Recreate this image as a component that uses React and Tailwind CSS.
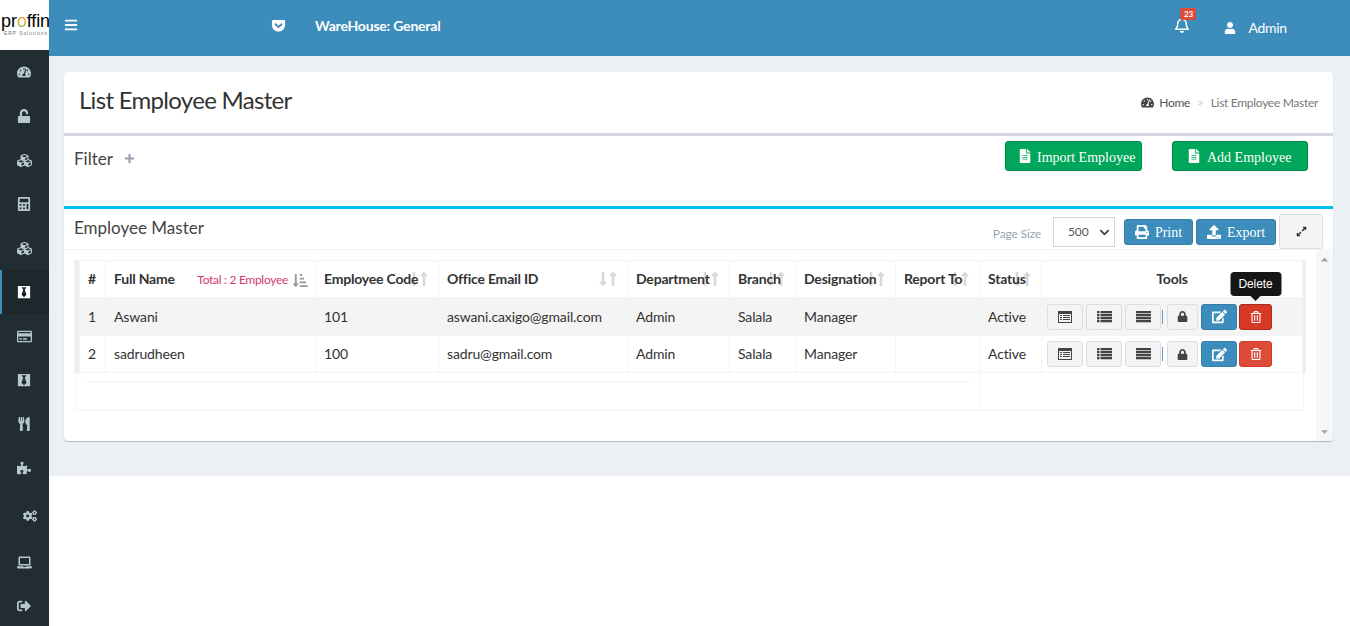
import React from "react";
import {
  FaBars, FaBlackTie, FaCalculator, FaCogs, FaCubes, FaEdit, FaExpandAlt,
  FaFileAlt, FaGetPocket, FaLaptop, FaLock, FaLongArrowAltDown, FaLongArrowAltUp,
  FaPlus, FaPrint, FaPuzzlePiece, FaRegBell, FaRegCreditCard, FaSignOutAlt, FaSortAmountDownAlt,
  FaTachometerAlt, FaRegTrashAlt, FaUnlock, FaUpload, FaUser, FaUtensils, FaCaretUp, FaCaretDown, FaChevronDown,
} from "react-icons/fa";

const sideItems = [
  { icon: FaTachometerAlt },
  { icon: FaUnlock },
  { icon: FaCubes, big: true },
  { icon: FaCalculator },
  { icon: FaCubes, big: true },
  { icon: FaBlackTie, active: true },
  { icon: FaRegCreditCard, big: true },
  { icon: FaBlackTie },
  { icon: FaUtensils },
  { icon: FaPuzzlePiece },
  { icon: FaCogs, h: "h-[52px]", pl: "pl-[23px]" },
  { icon: FaLaptop, h: "h-[40px]", big: true },
  { icon: FaSignOutAlt, h: "h-[44px] pt-[4px]" },
];

const columns = [
  { label: "#", w: "w-[26px]" },
  { label: "Full Name", w: "w-[210px]" },
  { label: "Employee Code", w: "w-[123px]", sort: true },
  { label: "Office Email ID", w: "w-[189px]", sort: true },
  { label: "Department", w: "w-[102px]", sort: true },
  { label: "Branch", w: "w-[66px]", sort: true },
  { label: "Designation", w: "w-[100px]", sort: true },
  { label: "Report To", w: "w-[84px]", sort: true },
  { label: "Status", w: "w-[62px]", sort: true },
];

const employees = [
  { id: 1, name: "Aswani", code: "101", email: "aswani.caxigo@gmail.com" },
  { id: 2, name: "sadrudheen", code: "100", email: "sadru@gmail.com" },
];

// the three table glyphs are heavier than the icon packs, so drawn here
const ListAltIcon = () => (
  <svg width="14" height="12" viewBox="0 0 14 12" fill="#444444">
    <path fillRule="evenodd" d="M0 0h14v12H0zM1 3v8h12V3z" />
    <rect x="2" y="4" width="2" height="1" />
    <rect x="5" y="4" width="7" height="1" />
    <rect x="2" y="6" width="2" height="1" />
    <rect x="5" y="6" width="7" height="1" />
    <rect x="2" y="8" width="2" height="1" />
    <rect x="5" y="8" width="7" height="1" />
  </svg>
);

const ListIcon = () => (
  <svg width="15" height="12" viewBox="0 0 15 12" fill="#444444">
    {[0, 3, 6, 9].map((y) => (
      <g key={y}>
        <rect x="0" y={y} width="2.5" height="2.3" />
        <rect x="3.5" y={y} width="11.5" height="2.3" />
      </g>
    ))}
  </svg>
);

const JustifyIcon = () => (
  <svg width="15" height="12" viewBox="0 0 15 12" fill="#444444">
    {[0, 3, 6, 9].map((y) => (
      <rect key={y} x="0" y={y} width="15" height="2.3" />
    ))}
  </svg>
);

const SortArrows = () => (
  <span className="absolute right-[6px] top-[10px] flex text-[#d8d8d8] text-[16px]">
    <FaLongArrowAltDown className="-mr-[6px]" />
    <FaLongArrowAltUp />
  </span>
);

const ToolButton = ({ children, className }) => (
  <button className={`h-[26px] flex items-center justify-center rounded-[3px] border ${className}`}>{children}</button>
);

const Tools = ({ hot }) => (
  <div className="flex items-center pl-[5px]">
    <ToolButton className="w-[36px] bg-[#f4f4f4] border-[#dddddd]"><ListAltIcon /></ToolButton>
    <div className="w-[3px]" />
    <ToolButton className="w-[36px] bg-[#f4f4f4] border-[#dddddd]"><ListIcon /></ToolButton>
    <div className="w-[3px]" />
    <ToolButton className="w-[36px] bg-[#f4f4f4] border-[#dddddd]"><JustifyIcon /></ToolButton>
    <div className="w-[1px] h-[14px] ml-[1px] mr-[4px] bg-[#6c9bd2]" />
    <ToolButton className="w-[31px] bg-[#f4f4f4] border-[#dddddd] text-[#444444]"><FaLock className="text-[11px]" /></ToolButton>
    <div className="w-[3px]" />
    <ToolButton className="w-[36px] bg-[#3c8dbc] border-[#367fa9] text-white">
      <FaEdit className="text-[15px]" />
    </ToolButton>
    <div className="w-[2px]" />
    <div className="relative">
      <ToolButton className={`w-[33px] text-white ${hot ? "bg-[#d73925] border-[#ac2925]" : "bg-[#dd4b39] border-[#d73925]"}`}>
        <FaRegTrashAlt className="text-[12px]" />
      </ToolButton>
      {hot && (
        <div className="absolute left-1/2 -translate-x-1/2 bottom-[29px] flex flex-col items-center">
          <div className="bg-[#161616] text-white text-[12px] leading-[24px] h-[24px] w-[51px] text-center rounded-[4px] font-['Liberation_Sans',sans-serif]">
            Delete
          </div>
          <div className="w-0 h-0 border-x-[5px] border-x-transparent border-t-[5px] border-t-[#161616]" />
        </div>
      )}
    </div>
  </div>
);

const headCell = "border border-[#f4f4f4] pl-[8px] pb-[2px]";

const App = () => {
  return (
    <div className="relative flex h-[626px] overflow-hidden bg-white text-[#333333] font-['Lato',sans-serif] text-[14px] tracking-[-0.13px]">
      {/* Sidebar */}
      <aside className="w-[49px] shrink-0 bg-[#222d32] text-[#b8c7ce]">
        <div className="h-[50px] bg-white text-black overflow-hidden flex flex-col pt-[11px] pl-[1px]">
          <div className="font-['Liberation_Sans',sans-serif] text-[18px] leading-[20px] tracking-[-0.1px] whitespace-nowrap">
            pr<span className="bg-gradient-to-b from-[#e2453a] via-[#eeb32c] to-[#4fae4e] bg-clip-text text-transparent">o</span>ffin
          </div>
          <div className="font-['Liberation_Sans',sans-serif] text-[5px] leading-[5px] ml-[3px] text-[#777777] tracking-[0.9px] whitespace-nowrap">ERP Solutions</div>
        </div>
        {sideItems.map((item, i) => {
          const Icon = item.icon;
          return (
            <div
              key={i}
              className={`flex items-center ${item.h || "h-[44px]"} ${item.big ? "text-[15px]" : "text-[14px]"} ${item.active ? "bg-[#1e282c] border-l-2 border-[#3c8dbc] text-white pl-[15px]" : item.pl || "pl-[17px]"}`}
            >
              <Icon />
            </div>
          );
        })}
      </aside>

      <main className="flex-1 min-w-0">
        {/* Top bar */}
        <header className="h-[56px] bg-[#3c8dbc] text-white flex items-center">
          <FaBars className="ml-[15px] text-[14px] -mt-[6px]" />
          <FaGetPocket className="ml-[193px] text-[15px] -mt-[5px]" />
          <span className="ml-[29px] font-bold text-[14px] tracking-[-0.2px] -mt-[5px]">WareHouse: General</span>
          <div className="relative ml-[734px] -mt-[6px]">
            <FaRegBell className="text-[16px]" />
            <span className="absolute -top-[9px] left-[6px] bg-[#dd4b39] rounded-[2px] text-white text-[8px] font-bold leading-[12px] w-[16px] text-center">23</span>
          </div>
          <FaUser className="ml-[34px] text-[12px] -mt-[1px]" />
          <span className="ml-[12px] text-[14px] tracking-[-0.3px] -mt-[1px]">Admin</span>
        </header>

        {/* Content */}
        <div className="h-[420px] bg-[#ecf0f5] pt-[16px] pl-[15px] pr-[17px]">
          <div className="h-[369px] bg-white rounded-[4px] shadow-[0_1px_1px_rgba(0,0,0,0.25)] flex flex-col">
            <div className="h-[64px] border-b-[3px] border-[#d2d6de] flex justify-between px-[15px]">
              <h1 className="text-[24px] leading-[56px] tracking-[-0.7px] text-[#333333]">List Employee Master</h1>
              <div className="flex items-center h-[61px] text-[12px] tracking-[-0.3px] text-[#777777]">
                <FaTachometerAlt className="text-[#444444] text-[13px] mr-[5px]" />
                <span className="text-[#555555]">Home</span>
                <span className="mx-[7px] text-[#cccccc]">&gt;</span>
                <span>List Employee Master</span>
              </div>
            </div>

            <div className="h-[70px] flex items-start justify-between pl-[10px] pr-[25px] pt-[5px]">
              <div className="flex items-center h-[37px] -mt-[1px] text-[17px] tracking-normal text-[#444444]">
                Filter
                <FaPlus className="ml-[11px] text-[11px] text-[#97a0b3]" />
              </div>
              <div className="flex gap-[30px] font-['Liberation_Serif',serif] text-[14px] tracking-normal text-white">
                <button className="w-[137px] h-[30px] pl-[12px] flex items-center gap-[5px] bg-[#00a65a] border border-[#008d4c] rounded-[3px]">
                  <FaFileAlt className="text-[14px]" />
                  <span className="pt-[3px]">Import Employee</span>
                </button>
                <button className="w-[136px] h-[30px] pl-[14px] flex items-center gap-[6px] bg-[#00a65a] border border-[#008d4c] rounded-[3px]">
                  <FaFileAlt className="text-[14px]" />
                  <span className="pt-[3px]">Add Employee</span>
                </button>
              </div>
            </div>

            <div className="flex-1 border-t-[3px] border-[#00c0ef] flex flex-col">
              <div className="h-[41px] border-b border-[#f4f4f4] flex justify-between px-[10px]">
                <div className="text-[17px] tracking-normal text-[#444444] leading-[38px]">Employee Master</div>
                <div className="flex items-start">
                  <span className="text-[12px] tracking-[-0.15px] text-[#9aa5b1] mt-[16px] mr-[12px]">Page Size</span>
                  <div className="w-[62px] h-[30px] mt-[8px] border border-[#d2d6de] flex items-center justify-between pl-[14px] pr-[4px] text-[12px] text-[#555555]">
                    500
                    <FaChevronDown className="text-[11px] text-[#444444]" />
                  </div>
                  <div className="flex gap-[3px] ml-[9px] mt-[10px] font-['Liberation_Serif',serif] text-[14px] tracking-normal text-white">
                    <button className="w-[69px] h-[26px] flex items-center justify-center gap-[6px] bg-[#3c8dbc] border border-[#367fa9] rounded-[3px]">
                      <FaPrint className="text-[14px]" /> Print
                    </button>
                    <button className="w-[80px] h-[26px] flex items-center justify-center gap-[6px] bg-[#3c8dbc] border border-[#367fa9] rounded-[3px]">
                      <FaUpload className="text-[14px]" /> Export
                    </button>
                  </div>
                  <button className="w-[44px] h-[35px] ml-[3px] mt-[5px] flex items-center justify-center bg-[#f4f4f4] border border-[#dddddd] rounded-[3px] text-[#333333]">
                    <FaExpandAlt className="text-[11px]" />
                  </button>
                </div>
              </div>

              {/* Scrolling table area */}
              <div className="flex-1 flex min-h-0">
                <div className="w-[1252px] pl-[10px] pt-[10px]">
                  <div className="w-[1232px] border-l-[5px] border-r-[3px] border-[#eeeeee]">
                    <table className="table-fixed w-[1224px] border-collapse">
                      <thead>
                        <tr className="h-[37px]">
                          {columns.map((c) => (
                            <th key={c.label} className={`${c.w} relative ${headCell} text-left font-bold text-[14px] tracking-[-0.2px] whitespace-nowrap`}>
                              {c.sort && <SortArrows />}
                              <span className="relative">{c.label}</span>
                              {c.label === "Full Name" && (
                                <span className="absolute right-[7px] top-[10px] flex items-center font-normal text-[12px] tracking-[-0.3px] text-[#d33a68]">
                                  Total : 2 Employee
                                  <FaSortAmountDownAlt className="ml-[5px] text-[#999999] text-[15px]" />
                                </span>
                              )}
                            </th>
                          ))}
                          <th className="border border-[#f4f4f4] pb-[2px] text-center font-bold tracking-[-0.2px]">Tools</th>
                        </tr>
                      </thead>
                      <tbody>
                        {employees.map((e, i) => {
                          const cell = `border border-[#f4f4f4] pl-[8px] ${i === 0 ? "" : "pb-[2px]"}`;
                          return (
                            <tr key={e.id} className={i === 0 ? "h-[38px] bg-[#f4f4f4]" : "h-[37px]"}>
                              <td className={cell}>{e.id}</td>
                              <td className={cell}>{e.name}</td>
                              <td className={cell}>{e.code}</td>
                              <td className={cell}>{e.email}</td>
                              <td className={cell}>Admin</td>
                              <td className={cell}>Salala</td>
                              <td className={cell}>Manager</td>
                              <td className={cell}></td>
                              <td className={cell}>Active</td>
                              <td className="border border-[#f4f4f4]"><Tools hot={i === 0} /></td>
                            </tr>
                          );
                        })}
                      </tbody>
                    </table>
                  </div>
                  <div className="ml-[2px] w-[1228px] h-[38px] border border-t-0 border-[#f4f4f4] flex">
                    <div className="w-[903px] border-r border-[#f4f4f4] pl-[8px] pr-[7px] pt-[8px]">
                      <div className="border-t border-[#f4f4f4]" />
                    </div>
                  </div>
                </div>
                <div className="w-[17px] ml-auto bg-[#f7f7f7] flex flex-col justify-between items-center text-[#a3a3a3] text-[11px] py-[4px] rounded-br-[4px]">
                  <FaCaretUp />
                  <FaCaretDown />
                </div>
              </div>
            </div>
          </div>
        </div>
      </main>
    </div>
  );
};

export default App;
